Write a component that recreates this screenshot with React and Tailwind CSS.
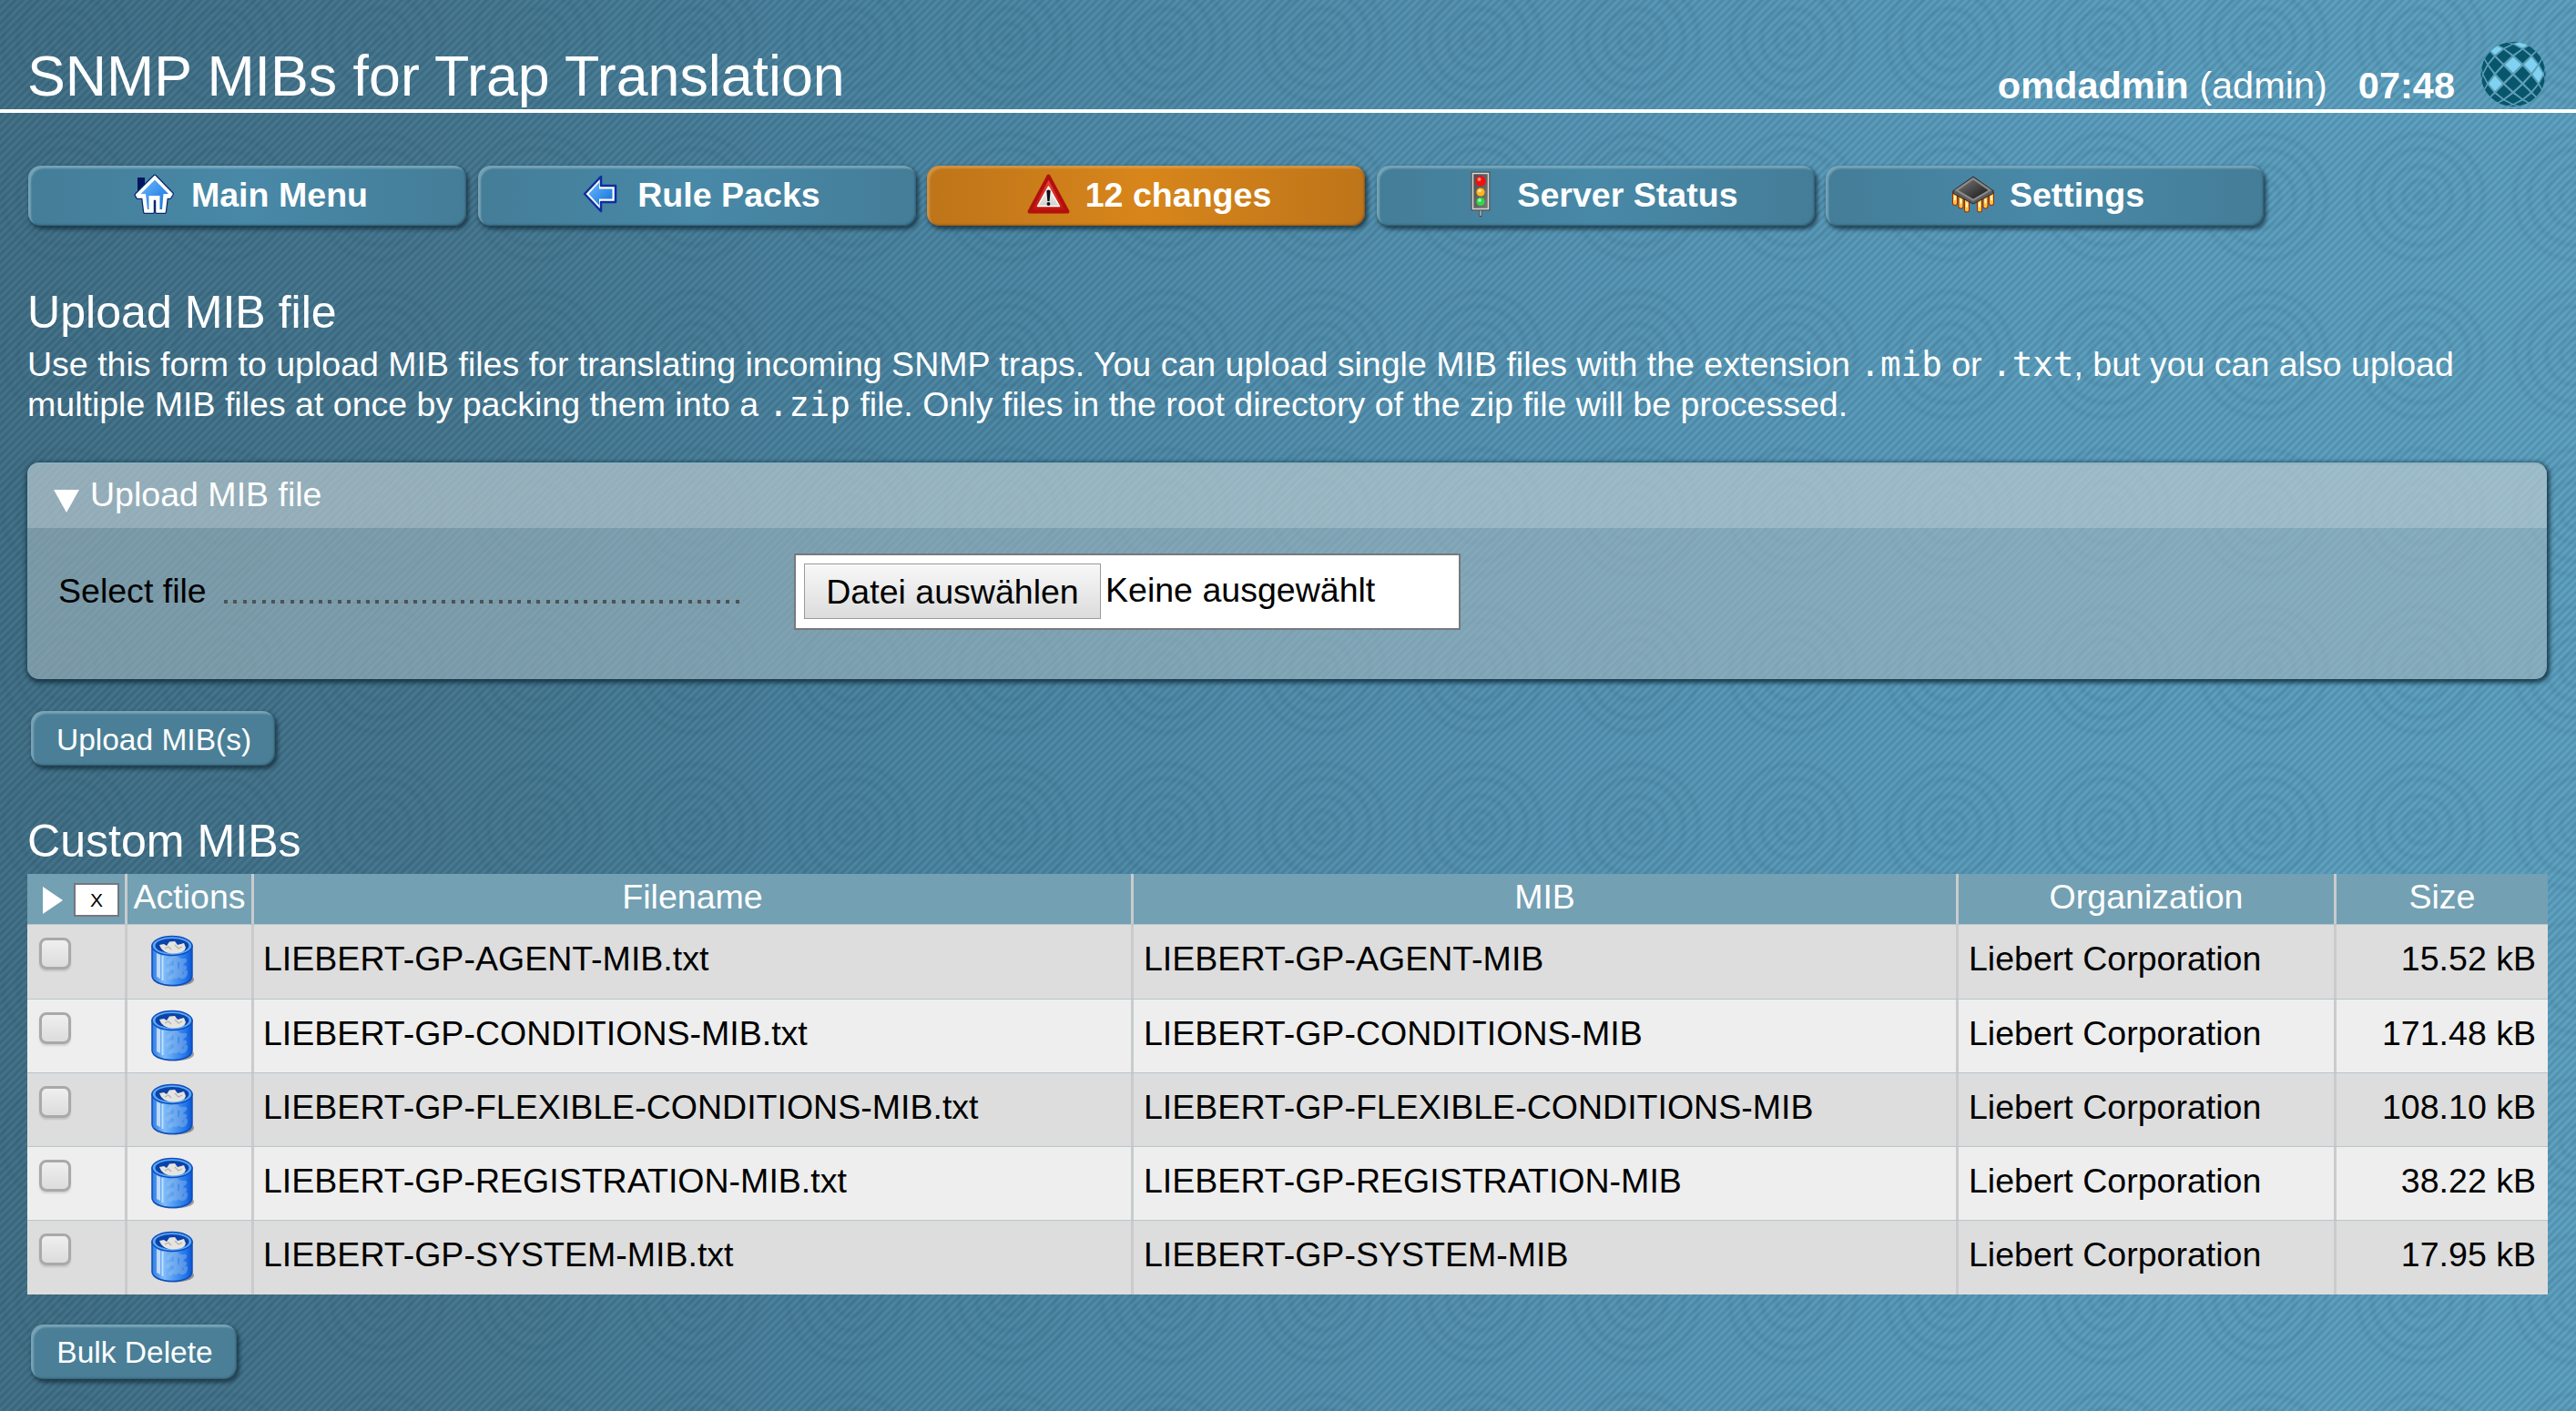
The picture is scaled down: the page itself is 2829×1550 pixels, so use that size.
import React from "react";

const HouseIcon = () => (
  <svg viewBox="0 0 50 50" className="h-[50px] w-[50px]">
    <defs>
      <linearGradient id="house" x1="0" y1="0" x2="1" y2="1">
        <stop offset="0" stopColor="#6cb8ff" />
        <stop offset="1" stopColor="#0f6fd8" />
      </linearGradient>
    </defs>
    <rect x="6" y="7" width="8" height="16" fill="#001560" />
    <path d="M25 5.500L44 25 41.500 29H38L36 45H27V31H23V45H14L12 29H6L4.500 26Z" fill="#fff" stroke="#0a2a6c" strokeWidth="4" strokeLinejoin="round" />
    <path d="M25 5.500L44 25 41.500 29H38L36 45H27V31H23V45H14L12 29H6L4.500 26Z" fill="#fff" stroke="#fff" strokeWidth="1.500" strokeLinejoin="round" />
    <path d="M25 9.500L40 25H34.500L33 42H30.500V27H18.500V42H17L15 25H9.500Z" fill="url(#house)" />
  </svg>
);

const ArrowIcon = () => (
  <svg viewBox="0 0 50 50" className="h-[50px] w-[50px]">
    <path d="M25 6L7 25 25 44V34H41V16H25Z" fill="#fff" stroke="#0b2fa0" strokeWidth="2.500" strokeLinejoin="round" />
    <path d="M23 12.500L11.500 25 23 37.500V30.500H37.500V19.500H23Z" fill="url(#house)" />
  </svg>
);

const WarningIcon = () => (
  <svg viewBox="0 0 50 50" className="h-[50px] w-[50px]">
    <defs>
      <linearGradient id="warn" x1="0" y1="0" x2="0" y2="1">
        <stop offset="0" stopColor="#f04a3c" />
        <stop offset="1" stopColor="#c4100c" />
      </linearGradient>
      <linearGradient id="warnIn" x1="0" y1="0" x2="0" y2="1">
        <stop offset="0" stopColor="#fff" />
        <stop offset="1" stopColor="#cfcfcf" />
      </linearGradient>
    </defs>
    <path d="M24.500 5.500L45.500 44.500H3.500Z" fill="url(#warn)" stroke="#b0110c" strokeWidth="4" strokeLinejoin="round" />
    <path d="M24.500 17L36.500 38.500H12.500Z" fill="url(#warnIn)" stroke="#fff" strokeWidth="1.500" strokeLinejoin="round" />
    <path d="M22.300 21.500Q24.500 19.500 26.700 21.500L25.600 33H23.400Z" fill="#111" />
    <circle cx="24.500" cy="36" r="1.900" fill="#111" />
  </svg>
);

const TrafficIcon = () => (
  <svg viewBox="0 0 50 50" className="h-[50px] w-[50px]">
    <defs>
      <linearGradient id="pole" x1="0" y1="0" x2="1" y2="1">
        <stop offset="0" stopColor="#4a4a4a" />
        <stop offset="1" stopColor="#7a7a76" />
      </linearGradient>
    </defs>
    <path d="M25 43V50" stroke="#444" strokeWidth="3" />
    <path d="M25 43V49" stroke="#ddd" strokeWidth="1.200" />
    <rect x="15.500" y="1.500" width="19" height="41" fill="url(#pole)" stroke="#555" strokeWidth="2" />
    <rect x="16.500" y="2.500" width="17" height="39" fill="none" stroke="#d8d8d8" strokeWidth="1.500" />
    <circle cx="25" cy="11" r="5.800" fill="#f01010" />
    <circle cx="23.500" cy="9" r="2" fill="#ff8a80" />
    <circle cx="25" cy="23" r="4.600" fill="#ffb61c" />
    <circle cx="24" cy="21.500" r="1.800" fill="#ffe79a" />
    <circle cx="25" cy="33.500" r="4.600" fill="#2fd84c" />
    <circle cx="24" cy="32" r="1.800" fill="#b5ffbd" />
  </svg>
);

const ChipIcon = () => {
  const pins = [[5, 28], [11.500, 31.500], [18, 35.500], [32, 35.500], [38.500, 31.500], [45, 28]];
  return (
    <svg viewBox="0 0 50 50" className="h-[50px] w-[50px]">
      <defs>
        <linearGradient id="chip" x1="0" y1="0" x2="1" y2="1">
          <stop offset="0" stopColor="#777" />
          <stop offset="1" stopColor="#161616" />
        </linearGradient>
      </defs>
      {pins.map(([x, y], i) => (
        <g key={i}>
          <path d={`M${x} ${y - 4}V${y + 7}`} stroke="#a02a08" strokeWidth="6" strokeLinecap="round" />
          <path d={`M${x} ${y - 4}V${y + 7}`} stroke="#ffc53a" strokeWidth="4" strokeLinecap="round" />
          <path d={`M${x} ${y - 1}V${y + 4}`} stroke="#fff3c0" strokeWidth="2" />
        </g>
      ))}
      <path d="M25 6L47 21.500V24.500L25 36 3 24.500V21.500Z" fill="#5c5c5c" stroke="#2a2a2a" strokeWidth="1" />
      <path d="M25 7L45.500 21 25 33 4.500 21Z" fill="#8a8a8a" />
      <path d="M25 9.500L41.500 21 25 30.500 8.500 21Z" fill="url(#chip)" />
    </svg>
  );
};

// Globe tiles sit on a diamond lattice that narrows towards the rim.
const project = (n) => 36 + 36 * Math.sin(Math.max(-5.3, Math.min(5.3, n)) * 0.295);
const LIT = ["0,-1", "2,-1", "-2,1", "3,0", "-2,-3", "1,-4"];
const TILES = [];
for (let i = -5; i <= 5; i++) {
  for (let j = -5; j <= 5; j++) {
    if ((i + j) % 2 !== 0) TILES.push([i, j]);
  }
}

const GlobeIcon = () => (
  <svg viewBox="0 0 72 72" className="h-[73px] w-[72px]">
    <defs>
      <clipPath id="ball"><circle cx="36" cy="36" r="35.500" /></clipPath>
    </defs>
    <g clipPath="url(#ball)">
      <circle cx="36" cy="36" r="36" fill="#5f9eb8" />
      {TILES.map(([i, j]) => {
        const k = 0.84;
        const pts = [[i, j - k], [i + k, j], [i, j + k], [i - k, j]];
        return (
          <polygon
            key={`${i},${j}`}
            points={pts.map(([a, b]) => `${project(a)},${project(b)}`).join(" ")}
            fill={LIT.includes(`${i},${j}`) ? "#7fd2f1" : "#07566b"}
          />
        );
      })}
    </g>
  </svg>
);

const TrashIcon = () => (
  <svg viewBox="0 0 50 58" className="h-[58px] w-[50px]">
    <defs>
      <linearGradient id="can" x1="0" y1="0" x2="1" y2="0">
        <stop offset="0" stopColor="#2f7de6" />
        <stop offset="0.300" stopColor="#7fbcf8" />
        <stop offset="0.550" stopColor="#4f9bf2" />
        <stop offset="0.850" stopColor="#1f74ea" />
        <stop offset="1" stopColor="#0c53cc" />
      </linearGradient>
    </defs>
    <ellipse cx="26" cy="49" rx="22" ry="7.500" fill="#000" opacity="0.350" />
    <path d="M2 12V45C2 51 12 55.500 24.500 55.500S46 51 46 45V12Z" fill="url(#can)" stroke="#0d4dbd" strokeWidth="1.500" />
    <path d="M7 20V46L11 48V22Z" fill="#fff" opacity="0.600" />
    <path d="M13.500 23V50" stroke="#dff0ff" strokeWidth="2" opacity="0.700" />
    <g fill="none" stroke="#b3c8e4" strokeWidth="4.500" opacity="0.350" strokeLinecap="round">
      <path d="M20 30Q26 22 31 27T38 28" />
      <path d="M19 39Q24 33 28 38T38 36" />
      <path d="M22 47Q28 42 33 45T39 41" />
      <path d="M28 26V46M35 28L33 44" />
    </g>
    <ellipse cx="24" cy="12" rx="22" ry="10.500" fill="#5ba8f8" stroke="#0d4dbd" strokeWidth="1.500" />
    <ellipse cx="24" cy="12" rx="18.500" ry="8" fill="#0b43a8" />
    <path d="M10 11L15 10 18 12 21 7.500 27 7 30 11 37 9 39 14Q38 20 24.500 20.500 13 20 10 11Z" fill="#e6e4e0" />
    <path d="M16 15L20 13 23 16M27 11L31 15 35 13" stroke="#b5b2ad" strokeWidth="1.200" fill="none" />
  </svg>
);

const NAV = [
  { label: "Main Menu", Icon: HouseIcon },
  { label: "Rule Packs", Icon: ArrowIcon },
  { label: "12 changes", Icon: WarningIcon, hot: true },
  { label: "Server Status", Icon: TrafficIcon },
  { label: "Settings", Icon: ChipIcon },
];

const ROWS = [
  ["LIEBERT-GP-AGENT-MIB", "15.52 kB"],
  ["LIEBERT-GP-CONDITIONS-MIB", "171.48 kB"],
  ["LIEBERT-GP-FLEXIBLE-CONDITIONS-MIB", "108.10 kB"],
  ["LIEBERT-GP-REGISTRATION-MIB", "38.22 kB"],
  ["LIEBERT-GP-SYSTEM-MIB", "17.95 kB"],
];

const COLS = "grid grid-cols-[107px_139px_966px_906px_415px_235px]";
const BEVEL = "shadow-[inset_3px_3px_2px_rgba(160,195,208,0.55),inset_-1px_-1px_2px_rgba(25,55,70,0.5),2px_3px_4px_1px_rgba(20,45,60,0.75)]";

function NavButton({ label, Icon, hot }) {
  const tone = hot
    ? "bg-linear-to-r from-[#be7419] via-[#d8861b] to-[#be7419] shadow-[inset_3px_3px_2px_rgba(225,165,90,0.6),inset_-1px_-1px_2px_rgba(90,50,10,0.5),2px_3px_4px_1px_rgba(20,45,60,0.75)]"
    : "bg-linear-to-r from-[#447d98] via-[#4889a7] to-[#447d98] " + BEVEL;
  return (
    <button className={"flex h-[66px] w-[481px] items-center justify-center gap-[15px] rounded-[14px] pb-[4px] pl-[6px] text-[37.6px] font-bold leading-none text-white " + tone}>
      <Icon />
      <span className="mt-[3px]">{label}</span>
    </button>
  );
}

function SmallButton({ children, width }) {
  return (
    <button className={"flex h-[60px] items-center justify-center rounded-[14px] bg-[#4a7f97] pl-[2px] pt-[3px] text-[33.500px] leading-none text-white " + BEVEL + " " + width}>
      {children}
    </button>
  );
}

const Mono = ({ children }) => (
  <span className="font-['DejaVu_Sans_Mono',monospace]">{children}</span>
);

export default function App() {
  return (
    <div className="relative h-[1550px] w-[2829px] overflow-hidden bg-[linear-gradient(90deg,#416d83_0%,#45758d_18%,#4c86a3_38%,#5795b4_60%,#5d9fbf_80%,#5fa3c2_100%)] font-['Liberation_Sans',Arial,sans-serif]">
      <div className="absolute inset-0 bg-[radial-gradient(circle_at_50%_50%,rgba(20,60,80,0.06)_0px,rgba(20,60,80,0.06)_6px,transparent_11px,transparent_13px,rgba(20,60,80,0.08)_18px,transparent_23px,transparent_29px,rgba(20,60,80,0.08)_34px,transparent_39px,transparent_48px,rgba(20,60,80,0.08)_53px,transparent_58px,transparent_64px,rgba(20,60,80,0.07)_69px,transparent_74px)] bg-size-[172.4px_173px] bg-position-[-14px_-43px]" />
      <div className="absolute inset-0 bg-[repeating-linear-gradient(135deg,rgba(20,55,75,0.19)_0px,rgba(110,185,215,0.10)_3px,rgba(20,55,75,0.19)_6px)]" />

      <div className="relative">
        <header className="flex h-[124px] items-start border-b-4 border-white pl-[30px] pr-[33px] text-white">
          <h1 className="mt-[48px] flex-1 text-[62.7px] leading-[70px]">SNMP MIBs for Trap Translation</h1>
          <div className="mt-[71px] flex whitespace-pre text-[41.500px] leading-[46px]">
            <b>omdadmin</b> (admin)<b className="ml-[34px]">07:48</b>
          </div>
          <div className="ml-[28px] mt-[45px]"><GlobeIcon /></div>
        </header>

        <nav className="flex gap-[12.500px] pl-[31px] pt-[58px]">
          {NAV.map((n) => <NavButton key={n.label} {...n} />)}
        </nav>

        <main className="pl-[30px] pr-[31px]">
          <h2 className="mt-[67px] text-[50.100px] leading-[56px] text-white">Upload MIB file</h2>
          <p className="mt-[8px] text-[37.540px] leading-[43.800px] text-white">
            Use this form to upload MIB files for translating incoming SNMP traps. You can upload single MIB files with the extension <Mono>.mib</Mono> or <Mono>.txt</Mono>, but you can also upload<br />
            multiple MIB files at once by packing them into a <Mono>.zip</Mono> file. Only files in the root directory of the zip file will be processed.
          </p>

          <section className="mt-[41.400px] mr-px h-[238px] overflow-hidden rounded-[13px] bg-[rgba(161,183,191,0.6)] shadow-[inset_1px_2px_1px_rgba(110,160,180,0.8),1px_2px_5px_2px_rgba(20,50,65,0.9)]">
            <div className="flex h-[72px] items-center bg-white/20 pl-[29px] text-[37.540px] leading-[42px] text-white">
              <svg viewBox="0 0 28 25" className="mt-[14px] h-[25px] w-[28px]"><path d="M0 0H28L14 25Z" fill="#fff" /></svg>
              <span className="-mt-[1px] ml-[12px]">Upload MIB file</span>
            </div>
            <div className="flex h-[140px] items-center pl-[34px] text-[37.540px] leading-[42px] text-black">
              <span className="w-[163px] -mt-px">Select file</span>
              <span className="ml-[19px] mt-[22px] h-[4px] w-[568px] bg-[repeating-linear-gradient(90deg,#4c5358_0px,#4c5358_4px,transparent_4px,transparent_10.400px)]" />
              <div className="ml-[58px] flex h-[84px] w-[732px] items-center border-2 border-[#77787c] bg-white pl-[9px]">
                <button className="h-[61px] w-[326px] border border-[#9a9a9a] bg-linear-to-b from-[#f8f8f8] to-[#dcdcdc]">Datei auswählen</button>
                <span className="-mt-[3px] ml-[5px]">Keine ausgewählt</span>
              </div>
            </div>
          </section>

          <div className="mt-[35px] pl-[4px]"><SmallButton width="w-[268px]">Upload MIB(s)</SmallButton></div>

          <h2 className="mt-[55px] h-[64px] text-[50.100px] leading-[56px] text-white">Custom MIBs</h2>

          <div className="w-[2768px] text-[37.540px] leading-[42px] [&>div>*:not(:first-child)]:border-l-[3px] [&>div>*]:border-[#c9cbcc]">
            <div className={COLS + " h-[55.5px] bg-[#73a0b3] text-center text-white [&>*]:pt-[4px]"}>
              <div className="flex items-start pl-[17px]">
                <svg viewBox="0 0 22 30" className="mt-[10px] h-[30px] w-[22px]"><path d="M0 0L22 15 0 30Z" fill="#fff" /></svg>
                <button className="ml-[12px] mt-[6px] h-[37px] w-[50px] border-2 border-[#74767b] bg-white text-[21px] leading-[33px] text-black">X</button>
              </div>
              <div>Actions</div>
              <div>Filename</div>
              <div>MIB</div>
              <div>Organization</div>
              <div>Size</div>
            </div>
            {ROWS.map(([mib, size], i) => (
              <div key={mib} className={COLS + " h-[81.250px] items-stretch border-t border-[#b9c5cc] text-black [&>*]:pt-[16px] " + (i % 2 ? "bg-[#eeeeee]" : "bg-[#dddddd]")}>
                <div className="pl-[13px]">
                  <div className="-mt-[2px] h-[35px] w-[35px] rounded-[8px] border-[3px] border-[#a9a9a9] bg-linear-to-b from-[#efefef] to-[#dcdcdc] shadow-[0_2px_2px_rgba(0,0,0,0.12)]" />
                </div>
                <div><div className="-mt-[5px] pl-[25px]"><TrashIcon /></div></div>
                <div className="pl-[10px]">{mib}.txt</div>
                <div className="pl-[11px]">{mib}</div>
                <div className="pl-[11px]">Liebert Corporation</div>
                <div className="pr-[13px] text-right">{size}</div>
              </div>
            ))}
          </div>

          <div className="mt-[33px] pl-[4px]"><SmallButton width="w-[226px]">Bulk Delete</SmallButton></div>
        </main>
      </div>
    </div>
  );
}
